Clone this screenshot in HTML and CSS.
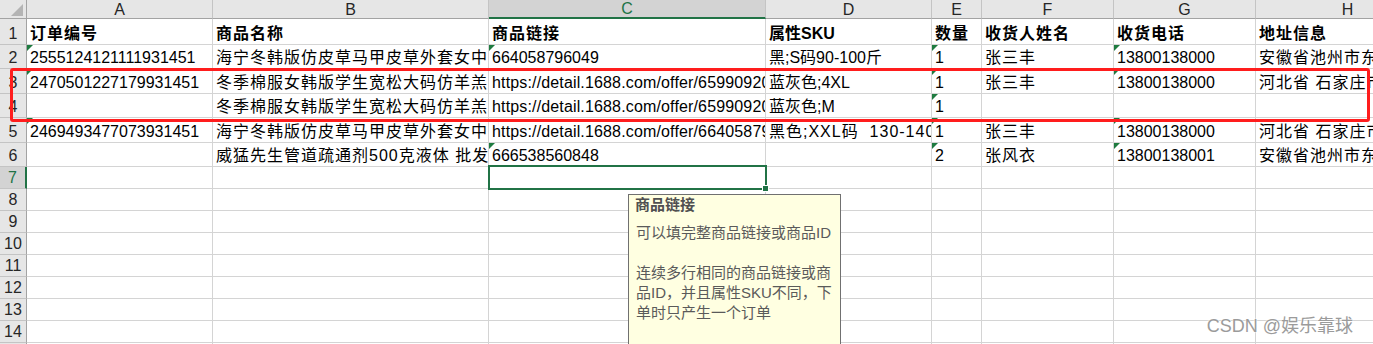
FILE: index.html
```html
<!DOCTYPE html>
<html>
<head>
	<meta charset="utf-8">
	<title>订单导入模板</title>
	<link rel="stylesheet" href="styles.css">
</head>
<body>
	<div class="book">
		<table class="sheet">
			<colgroup>
				<col class="w-head">
				<col class="w-a">
				<col class="w-b">
				<col class="w-c">
				<col class="w-d">
				<col class="w-e">
				<col class="w-f">
				<col class="w-g">
				<col class="w-h">
			</colgroup>
			<tr class="r-cols">
				<th class="corner"></th>
				<th class="col">A</th>
				<th class="col">B</th>
				<th class="col on">C</th>
				<th class="col">D</th>
				<th class="col">E</th>
				<th class="col">F</th>
				<th class="col">G</th>
				<th class="col">H</th>
			</tr>
			<tr class="r-title">
				<th class="row">1</th>
				<td class="bold cn">订单编号</td>
				<td class="bold cn">商品名称</td>
				<td class="bold cn">商品链接</td>
				<td class="bold">属性SKU</td>
				<td class="bold cn">数量</td>
				<td class="bold cn">收货人姓名</td>
				<td class="bold cn">收货电话</td>
				<td class="bold cn">地址信息</td>
			</tr>
			<tr class="r-24">
				<th class="row">2</th>
				<td class="txt">2555124121111931451</td>
				<td class="cn">海宁冬韩版仿皮草马甲皮草外套女中长款</td>
				<td class="txt">664058796049</td>
				<td>黑;S码90-100斤</td>
				<td class="txt">1</td>
				<td class="cn">张三丰</td>
				<td class="txt">13800138000</td>
				<td class="cn">安徽省池州市东至县尧渡镇</td>
			</tr>
			<tr class="r-25">
				<th class="row">3</th>
				<td class="txt">2470501227179931451</td>
				<td class="cn">冬季棉服女韩版学生宽松大码仿羊羔毛外套</td>
				<td class="url">https://detail.1688.com/offer/659909200001.html</td>
				<td>蓝灰色;4XL</td>
				<td class="txt">1</td>
				<td class="cn">张三丰</td>
				<td class="txt">13800138000</td>
				<td class="cn">河北省 石家庄市 长安区</td>
			</tr>
			<tr class="r-24">
				<th class="row">4</th>
				<td></td>
				<td class="cn">冬季棉服女韩版学生宽松大码仿羊羔毛外套</td>
				<td class="url">https://detail.1688.com/offer/659909200001.html</td>
				<td>蓝灰色;M</td>
				<td class="txt">1</td>
				<td></td>
				<td></td>
				<td></td>
			</tr>
			<tr class="r-25">
				<th class="row">5</th>
				<td class="txt">2469493477073931451</td>
				<td class="cn">海宁冬韩版仿皮草马甲皮草外套女中长款</td>
				<td class="url">https://detail.1688.com/offer/664058796049.html</td>
				<td class="cn">黑色;XXL码&nbsp; 130-140斤</td>
				<td class="txt">1</td>
				<td class="cn">张三丰</td>
				<td class="txt">13800138000</td>
				<td class="cn">河北省 石家庄市 长安区</td>
			</tr>
			<tr class="r-24">
				<th class="row">6</th>
				<td></td>
				<td class="cn">威猛先生管道疏通剂500克液体 批发</td>
				<td class="txt">666538560848</td>
				<td></td>
				<td class="txt">2</td>
				<td class="cn">张风衣</td>
				<td class="txt">13800138001</td>
				<td class="cn">安徽省池州市东至县尧渡镇</td>
			</tr>
			<tr class="r-22">
				<th class="row on">7</th>
				<td></td><td></td><td></td><td></td><td></td><td></td><td></td><td></td>
			</tr>
			<tr class="r-22">
				<th class="row">8</th>
				<td></td><td></td><td></td><td></td><td></td><td></td><td></td><td></td>
			</tr>
			<tr class="r-22">
				<th class="row">9</th>
				<td></td><td></td><td></td><td></td><td></td><td></td><td></td><td></td>
			</tr>
			<tr class="r-22">
				<th class="row">10</th>
				<td></td><td></td><td></td><td></td><td></td><td></td><td></td><td></td>
			</tr>
			<tr class="r-22">
				<th class="row">11</th>
				<td></td><td></td><td></td><td></td><td></td><td></td><td></td><td></td>
			</tr>
			<tr class="r-22">
				<th class="row">12</th>
				<td></td><td></td><td></td><td></td><td></td><td></td><td></td><td></td>
			</tr>
			<tr class="r-22">
				<th class="row">13</th>
				<td></td><td></td><td></td><td></td><td></td><td></td><td></td><td></td>
			</tr>
			<tr class="r-22">
				<th class="row">14</th>
				<td></td><td></td><td></td><td></td><td></td><td></td><td></td><td></td>
			</tr>
			<tr class="r-22">
				<th class="row">15</th>
				<td></td><td></td><td></td><td></td><td></td><td></td><td></td><td></td>
			</tr>
		</table>

		<!-- active cell C7 -->
		<div class="active-cell"></div>

		<!-- highlight around rows 3-4 -->
		<div class="mark"></div>

		<div class="comment">
			<div class="comment-title">商品链接</div>
			<div class="comment-body">可以填完整商品链接或商品ID<br><br>连续多行相同的商品链接或商<br>品ID，并且属性SKU不同，下<br>单时只产生一个订单</div>
		</div>

		<div class="watermark">CSDN @娱乐靠球</div>
	</div>
</body>
</html>
```

FILE: styles.css
```css
body {
	margin: 0;
	font-family: "Liberation Sans", "Noto Sans CJK SC", sans-serif;
	font-size: 16px;
	color: #000;
	background: #fff;
	overflow: hidden;
}

.book {
	position: relative;
	width: 1373px;
	height: 344px;
	overflow: hidden;
}

.sheet {
	border-collapse: separate;
	border-spacing: 0;
	table-layout: fixed;
	width: 1440px;
}

.w-head { width: 27px; }
.w-a { width: 186px; }
.w-b { width: 276px; }
.w-c { width: 277px; }
.w-d { width: 166px; }
.w-e { width: 50px; }
.w-f { width: 132px; }
.w-g { width: 142px; }
.w-h { width: 184px; }

.r-cols { height: 18px; }
.r-title { height: 26px; }
.r-24 { height: 24px; }
.r-25 { height: 25px; }
.r-22 { height: 22px; }

.sheet td,
.sheet th {
	box-sizing: border-box;
	padding: 0 3px;
	line-height: 20px;
	white-space: nowrap;
	overflow: hidden;
	vertical-align: bottom;
	text-align: left;
	font-weight: normal;
	border-right: 1px solid #d4d4d4;
	border-bottom: 1px solid #d4d4d4;
}

.sheet td.bold {
	font-weight: bold;
}

.sheet td.cn {
	letter-spacing: 1px;
}

.sheet td.url {
	letter-spacing: 0.15px;
}

/* number stored as text: green corner */
.sheet td.txt {
	position: relative;
}
.sheet td.txt::before {
	content: "";
	position: absolute;
	top: 0;
	left: 0;
	border-top: 6px solid #1e7b40;
	border-right: 6px solid transparent;
}

/* headers */
.sheet th.col {
	background: #e6e6e6;
	color: #262626;
	text-align: center;
	vertical-align: middle;
	line-height: 17px;
	border-right: 1px solid #c4c4c4;
	border-bottom: 1px solid #a3a3a3;
}

.sheet th.row {
	background: #e6e6e6;
	color: #262626;
	text-align: center;
	padding: 0;
	border-right: 1px solid #a3a3a3;
	border-bottom: 1px solid #c4c4c4;
}

.sheet th.col.on {
	background: #d3d3d3;
	color: #217346;
	border-bottom: 2px solid #217346;
}

.sheet th.row.on {
	background: #d3d3d3;
	color: #217346;
	border-right: 2px solid #217346;
}

.sheet th.corner {
	position: relative;
	background: #e6e6e6;
	border-right: 1px solid #a3a3a3;
	border-bottom: 1px solid #a3a3a3;
}
.sheet th.corner::after {
	content: "";
	position: absolute;
	right: 3px;
	bottom: 2px;
	border-bottom: 12px solid #b4b4b4;
	border-left: 12px solid transparent;
}

.active-cell {
	position: absolute;
	left: 488px;
	top: 165px;
	width: 279px;
	height: 25px;
	box-sizing: border-box;
	border: 2px solid #217346;
}
.active-cell::after {
	content: "";
	position: absolute;
	right: -4px;
	bottom: -4px;
	width: 5px;
	height: 5px;
	background: #217346;
	border: 1px solid #fff;
}

.mark {
	position: absolute;
	left: 10px;
	top: 68px;
	width: 1360px;
	height: 54px;
	box-sizing: border-box;
	border: 3px solid #ff1d1d;
	border-radius: 3px;
}

.comment {
	position: absolute;
	left: 628px;
	top: 194px;
	width: 213px;
	height: 170px;
	box-sizing: border-box;
	background: #ffffe1;
	border: 1px solid #707070;
	padding: 0 6px 0 6px;
	font-family: "Liberation Sans", "Noto Sans CJK SC", sans-serif;
	font-size: 15px;
	color: #5a5a5a;
}

.comment-title {
	font-weight: bold;
	line-height: 20px;
	color: #505050;
}

.comment-body {
	margin-top: 8px;
	padding-left: 1px;
	line-height: 20px;
	white-space: nowrap;
}

.watermark {
	position: absolute;
	right: 20px;
	bottom: 7px;
	font-size: 18px;
	line-height: 22px;
	color: #9b9b9b;
	text-shadow: 0 0 2px #fff, 0 0 2px #fff;
}
```
